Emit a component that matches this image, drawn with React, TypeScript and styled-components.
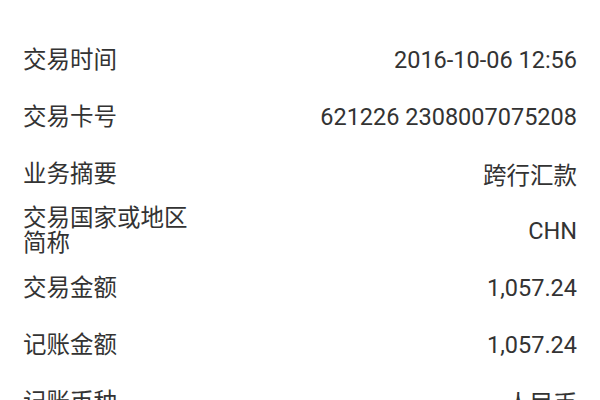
import React from "react";
import styled, { createGlobalStyle } from "styled-components";

const Global = createGlobalStyle`
  html, body { margin: 0; padding: 0; background: #ffffff; }
  body { font-family: Roboto, "Noto Sans CJK SC", sans-serif; }
`;

const Page = styled.div`
  width: 600px;
  height: 400px;
  overflow: hidden;
  background: #ffffff;
  padding-top: 31px;
  box-sizing: border-box;
`;

const Row = styled.div`
  display: flex;
  justify-content: space-between;
  align-items: center;
  height: 57px;
  padding: 0 23px 0 23px;
  box-sizing: border-box;
  font-size: 23.5px;
  color: #333333;
`;

const Label = styled.div`
  font-family: "Noto Sans CJK SC", sans-serif;
  max-width: 172px;
  line-height: 25px;
  margin-top: -3px;
`;

const Value = styled.div<{ $cjk?: boolean }>`
  font-family: ${(p) => (p.$cjk ? `"Noto Sans CJK SC", sans-serif` : `Roboto, "Noto Sans CJK SC", sans-serif`)};
  text-align: right;
  line-height: 28px;
  white-space: nowrap;
`;

const rows: { label: string; value: string; cjk?: boolean }[] = [
  { label: "交易时间", value: "2016-10-06 12:56" },
  { label: "交易卡号", value: "621226 2308007075208" },
  { label: "业务摘要", value: "跨行汇款", cjk: true },
  { label: "交易国家或地区简称", value: "CHN" },
  { label: "交易金额", value: "1,057.24" },
  { label: "记账金额", value: "1,057.24" },
  { label: "记账币种", value: "人民币", cjk: true },
];

export default function App() {
  return (
    <>
      <Global />
      <Page>
        {rows.map((r) => (
          <Row key={r.label}>
            <Label>{r.label}</Label>
            <Value $cjk={r.cjk}>{r.value}</Value>
          </Row>
        ))}
      </Page>
    </>
  );
}
